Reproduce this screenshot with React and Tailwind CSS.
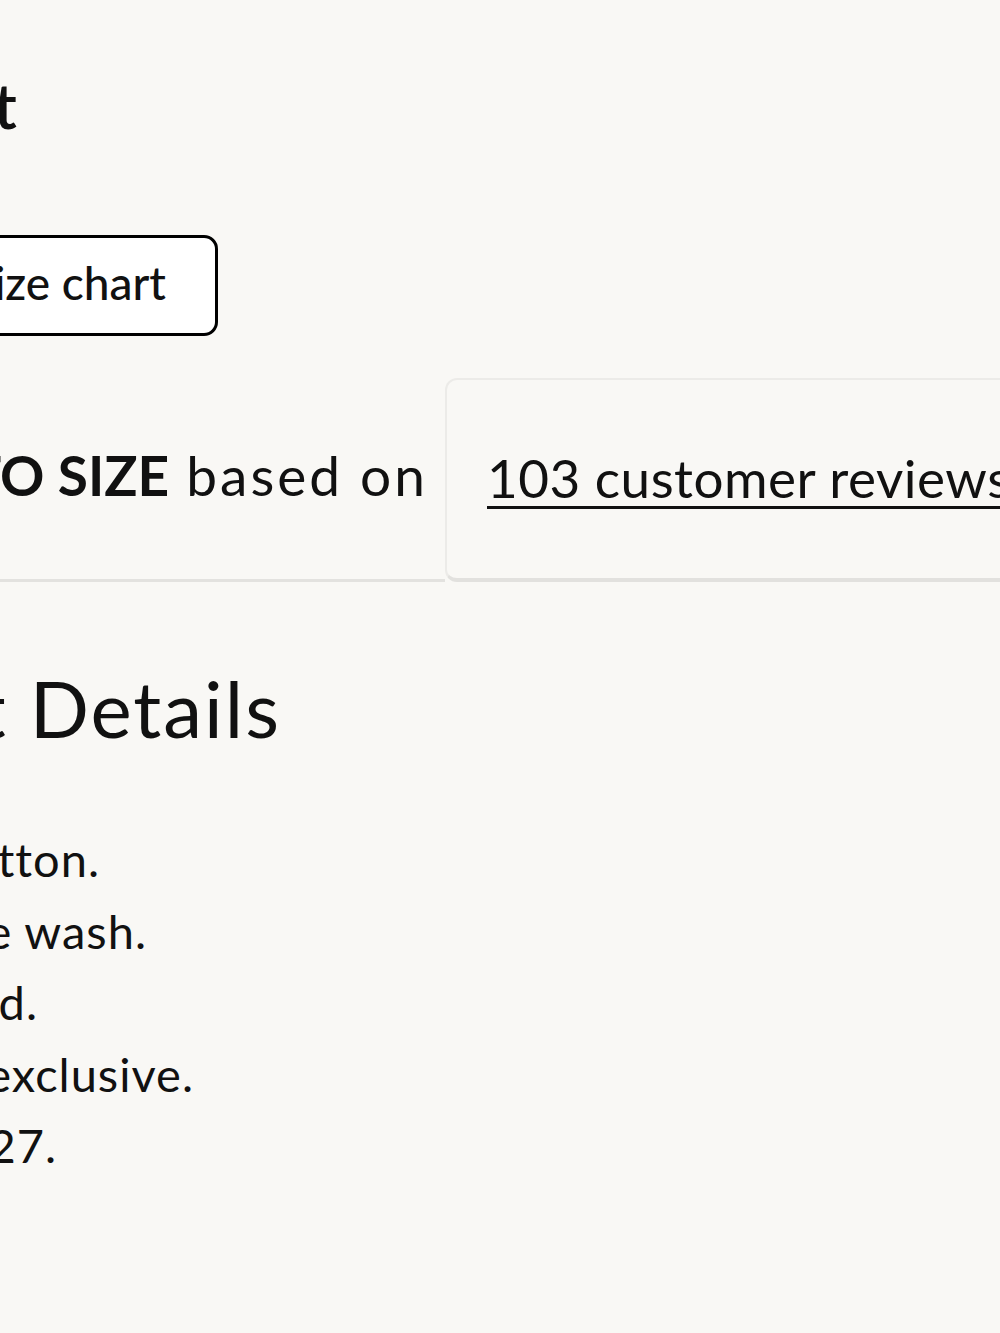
export default function App() {
  return (
    <div
      className="w-[1000px] h-[1333px] overflow-hidden bg-[#f9f8f5] text-[#111111]"
      style={{ fontFamily: "Lato, 'Open Sans', sans-serif" }}
    >
      <div className="flex flex-col">
        {/* Product Fit heading */}
        <div className="h-[65px]" />
        <div className="flex justify-end w-[17px] whitespace-nowrap text-[64px] leading-[80px] font-semibold">
          <span className="shrink-0">Product Fit</span>
        </div>

        {/* Size chart button */}
        <div className="h-[90px]" />
        <div className="flex justify-end w-[218px] whitespace-nowrap">
          <button className="shrink-0 h-[101px] bg-white border-[3px] border-black rounded-[14px] pl-[60px] pr-[49px] pb-[6px] text-[46px] font-medium leading-none text-[#111111]">
            View size chart
          </button>
        </div>

        {/* True to size row */}
        <div className="h-[42px]" />
        <div className="flex h-[204px] w-[1100px]">
          <div className="flex shrink-0 justify-end items-center w-[445px] border-b-[3px] border-[#e3e2df] whitespace-nowrap pr-[17px] pb-[6px] text-[55px] leading-none">
            <span className="shrink-0">
              <span className="font-bold">TRUE TO SIZE</span>
              <span className="tracking-[3px]"> based on</span>
            </span>
          </div>
          <div className="flex-1 flex items-center rounded-[12px] border-2 border-[#ecebe8] border-b-[4px] border-b-[#e2e1de] bg-[#f9f8f5] pl-[40px] pb-[4px] whitespace-nowrap text-[53px] leading-none tracking-[0.5px]">
            <span className="underline decoration-[3px] underline-offset-[8px]">
              103 customer reviews
            </span>
          </div>
        </div>

        {/* Product details */}
        <div className="h-[87px]" />
        <div className="flex justify-end w-[281px] whitespace-nowrap text-[78px] leading-[78px] tracking-[2px]">
          <span className="shrink-0">Product Details</span>
        </div>

        <div className="h-[77px]" />
        <div className="flex flex-col text-[47px] leading-[71.5px] whitespace-nowrap tracking-[1px]">
          <div className="flex justify-end w-[100px]">
            <span className="shrink-0">100% cotton.</span>
          </div>
          <div className="flex justify-end w-[147px]">
            <span className="shrink-0">Medium stone wash.</span>
          </div>
          <div className="flex justify-end w-[38px]">
            <span className="shrink-0">Imported.</span>
          </div>
          <div className="flex justify-end w-[194px]">
            <span className="shrink-0">Madewell exclusive.</span>
          </div>
          <div className="flex justify-end w-[57px]">
            <span className="shrink-0">Item NA027.</span>
          </div>
        </div>
      </div>
    </div>
  );
}
